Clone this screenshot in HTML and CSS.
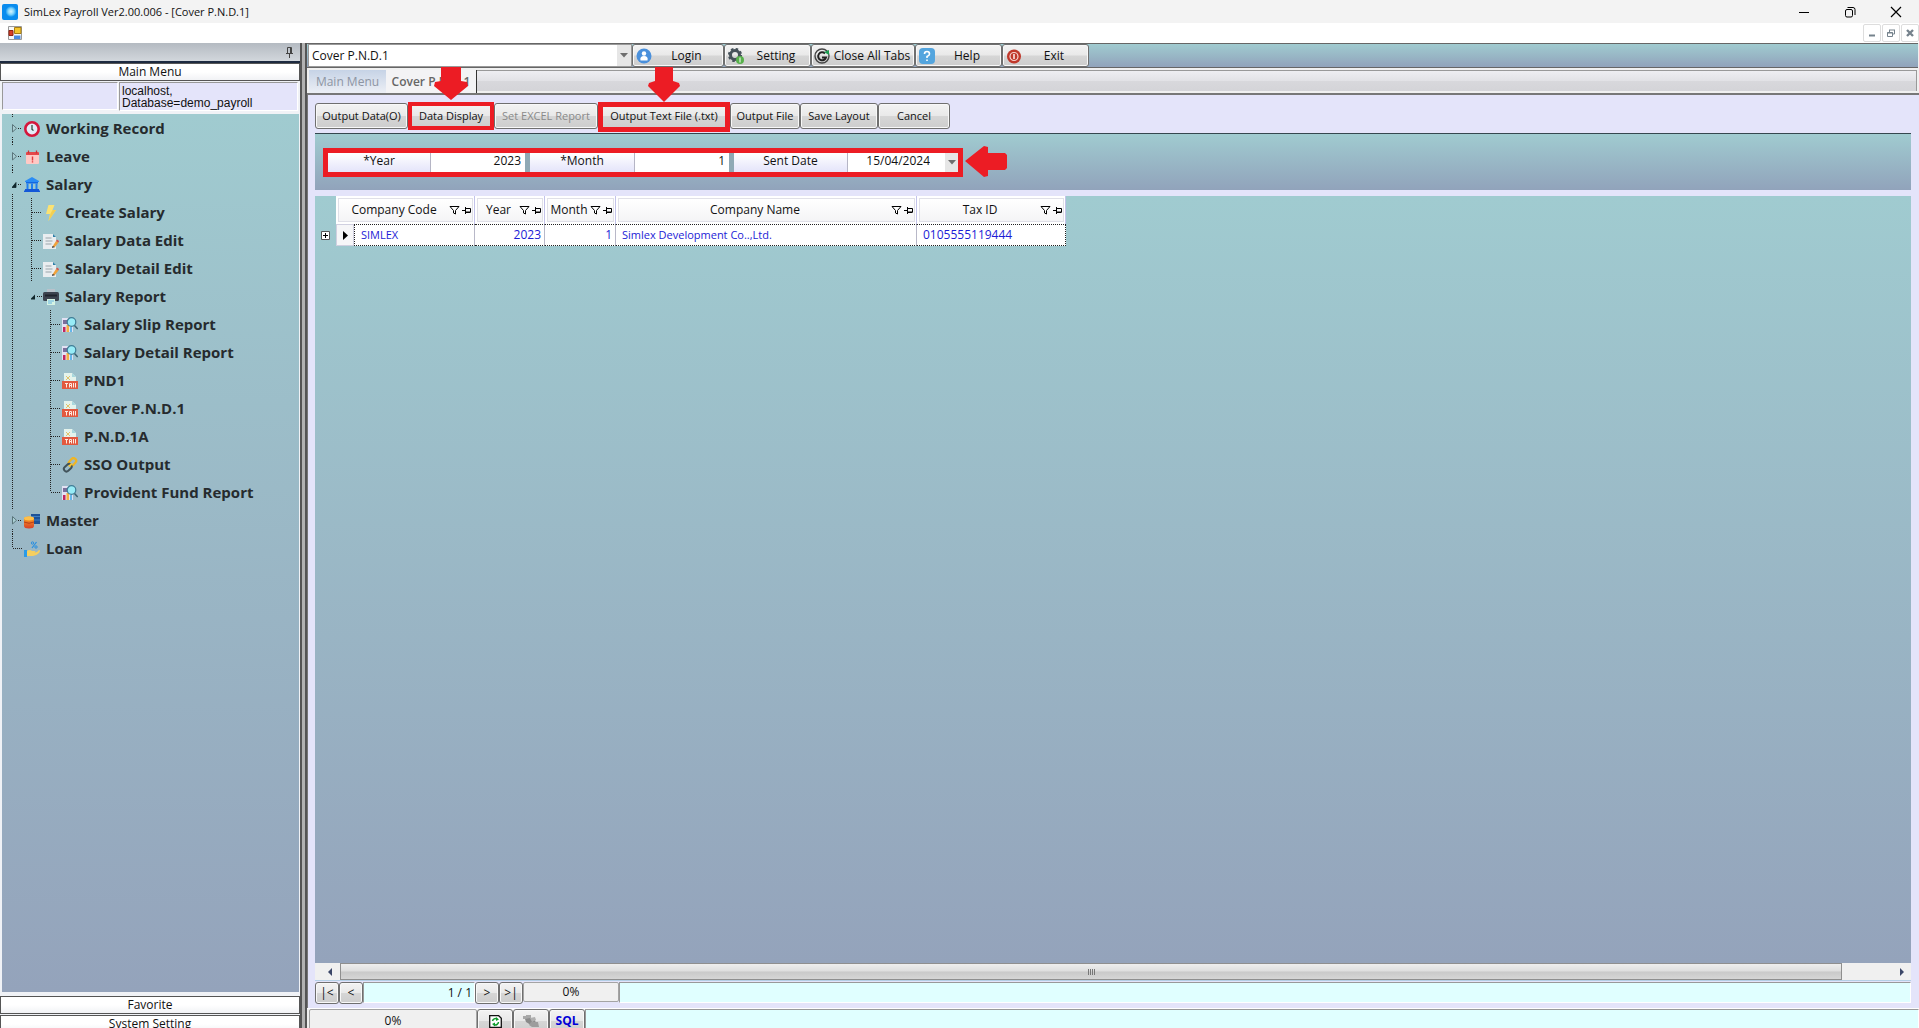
FILE: index.html
```
<!DOCTYPE html>
<html lang="en">
<head>
<meta charset="utf-8">
<title>SimLex Payroll Ver2.00.006 - [Cover P.N.D.1]</title>
<link rel="stylesheet" href="styles.css">
</head>
<body>
<svg class="sprite" aria-hidden="true">
  <defs>
    <linearGradient id="gDb" x1="0" y1="0" x2="0" y2="1"><stop offset="0" stop-color="#ffa51e"/><stop offset="1" stop-color="#d6402a"/></linearGradient>
    <radialGradient id="gApp"><stop offset="0" stop-color="#d8f4ff"/><stop offset=".55" stop-color="#7fd3fb"/><stop offset="1" stop-color="#0a90f0"/></radialGradient>
  </defs>
  <symbol id="t-closed" viewBox="0 0 12 28"><path d="M.5 23v5" class="dots"/><path d="M.5 0v4" class="dots"/><path d="M6 14.500h4" class="dots"/><path d="M.5 10.500v7.500l4-3.700z" fill="#a9ced3" stroke="#5a757b"/></symbol>
  <symbol id="t-open" viewBox="0 0 12 28"><path d="M6 14.500h6" class="dots"/><path d="M-1 17.500h5v-5z" fill="#10262b"/></symbol>
  <symbol id="t-open0" viewBox="0 0 12 28"><path d="M6 14.500h4M.5 24v4M.5 0v4" class="dots"/><path d="M0 17.500h4v-5z" fill="#10262b" stroke="#10262b" stroke-width=".8"/></symbol>
  <symbol id="t-item" viewBox="0 0 12 28"><path d="M.5 0v28M1 14.500h10" class="dots"/></symbol>
  <symbol id="t-last" viewBox="0 0 12 28"><path d="M.5 0v14M.5 14.500h10" class="dots"/></symbol>
  <symbol id="t-line" viewBox="0 0 19 28"><path d="M.5 0v28" class="dots"/></symbol>
  <symbol id="i-clock" viewBox="0 0 16 16"><circle cx="8" cy="8" r="6.700" fill="#e3ecf8" stroke="#d5173c" stroke-width="2.600"/><path d="M8 4v4.500l1.500 1" stroke="#243" stroke-width="1.200" fill="none"/></symbol>
  <symbol id="i-cal" viewBox="0 0 16 16"><rect x="2" y="3" width="13" height="12" rx="1" fill="#ffc9c5"/><path d="M2 6V3.500Q2 3 3 3h11q1 0 1 .5V6z" fill="#e5484a"/><path d="M4.500 1.500v3M12.500 1.500v3" stroke="#c93338" stroke-width="1.300"/><path d="M8.500 7.500v4M8.500 12.300v1.300" stroke="#e23a3d" stroke-width="1.400"/></symbol>
  <symbol id="i-bank" viewBox="0 0 16 16"><path d="M8 0l7 4v1H1V4z" fill="#2a8cf5"/><path d="M2 5h12v1.500H2z" fill="#1467e0"/><path d="M2.500 6.500h2V12h-2zM7 6.500h2V12H7zM11.500 6.500h2V12h-2z" fill="#1f7ff0"/><path d="M1 12h14v1.500h1V15H0v-1.500h1z" fill="#1458d8"/></symbol>
  <symbol id="i-bolt" viewBox="0 0 16 16"><path d="M5.500 0h6L9.500 5H13L5.500 16 7 9H3z" fill="#fbe272"/><path d="M9.500 5H13L5.500 16 7.500 8.500z" fill="#f2cf52"/></symbol>
  <symbol id="i-edit" viewBox="0 0 16 16"><path d="M0 1h10l3 3v12H0z" fill="#e9edf0"/><path d="M10 1l3 3h-3z" fill="#2f80a8"/><path d="M2.500 5h6M2.500 8h7M2.500 11h6" stroke="#9aa5ab"/><path d="M9.500 13.500L13 8l2.500 1.500-4 5z" fill="#f0a23c"/><path d="M13 8l1-1.500 2 1.500-.5 1.500z" fill="#d9534a"/><path d="M9.500 13l-.5 2 3-1z" fill="#333"/></symbol>
  <symbol id="i-print" viewBox="0 0 16 16"><path d="M4 0h8v5H4z" fill="#b9c2cb"/><rect y="3" width="16" height="9" rx="1.500" fill="#3d4450"/><path d="M2 5.500h12v2H2z" fill="#20252e"/><path d="M4 10h8v6H4z" fill="#d5f3e4"/><path d="M5 12h6M5 14h4" stroke="#67b4e0"/></symbol>
  <symbol id="i-report" viewBox="0 0 16 16"><path d="M0 1h11v14H0z" fill="#e2e1f3"/><path d="M1 3h4v4H1z" fill="#7b6f9b"/><path d="M1 10h2.500v5H1z" fill="#c2265f"/><path d="M4.500 8H7v7H4.500z" fill="#f5b043"/><path d="M8 10h2v5H8z" fill="#65b7ea"/><circle cx="9.500" cy="5" r="4.300" fill="#97ecf7" stroke="#3f7d96" stroke-width="1.200"/><path d="M12.500 8.500l3.200 3.500" stroke="#3b6272" stroke-width="1.500"/></symbol>
  <symbol id="i-tax" viewBox="0 0 16 16"><path d="M2 0h8l4 4v5H2z" fill="#e4f3ec"/><path d="M10 0l4 4h-4z" fill="#a8d8dd"/><path d="M4 3l4 4M8 3L4 7" stroke="#e2c269"/><path d="M0 8h16v8H0z" fill="#e2593f"/><path d="M3 10.500h3M4.500 10.500V14.500M7.500 14.500v-4h2v4M7.500 12.500h2M11.500 10v4.500M13.500 10v4.500" stroke="#ffe9df" fill="none"/></symbol>
  <symbol id="i-link" viewBox="0 0 16 16" fill="none"><rect x="-3.600" y="-2.600" width="8.500" height="5.200" rx="2.600" transform="translate(10 5.500) rotate(-48)" stroke="#f0b524" stroke-width="2.200"/><rect x="-4.600" y="-2.600" width="8.500" height="5.200" rx="2.600" transform="translate(6 10.500) rotate(-42)" stroke="#41525a" stroke-width="2"/><path d="M7 9.500l3-3" stroke="#f2c53b" stroke-width="1.800"/></symbol>
  <symbol id="i-db" viewBox="0 0 16 16"><path d="M7 1h9v10H7z" fill="#1d5298"/><path d="M7 3.500h9M7 7h9" stroke="#3f7fc4"/><path d="M0 5.500q0-2 5-2t5 2v7.500q0 2.500-5 2.500t-5-2.500z" fill="url(#gDb)"/><ellipse cx="5" cy="5.500" rx="5" ry="1.900" fill="#ffc04a"/><path d="M0 9q5 2.500 10 0" stroke="#a83119" fill="none" stroke-width=".8"/></symbol>
  <symbol id="i-loan" viewBox="0 0 16 16"><path d="M0 9h3v7H0z" fill="#2b9be8"/><path d="M3 10q3-2 5 0h3q1 1-1 2 4-1 5-3 2 0 0 3-3 3-6 3H3z" fill="#f6cf5f"/><circle cx="8.500" cy="2" r="1.200" stroke="#2a8fe0" fill="none"/><circle cx="12" cy="6" r="1.200" stroke="#2a8fe0" fill="none"/><path d="M12.500 1L8 7" stroke="#2a8fe0" stroke-width="1.200"/></symbol>
  <symbol id="i-filter" viewBox="0 0 11 10"><path d="M1 1.500h9L6.500 5.500V9L4.500 8V5.500z" fill="#fff" stroke="#000"/></symbol>
  <symbol id="i-hpin" viewBox="0 0 10 8"><path d="M0 4.500h3.500M3.500 1v7M3.500 2.500h5v3.500h-5M3.500 6.500h5" stroke="#000" fill="none"/></symbol>
  <symbol id="i-down" viewBox="0 0 8 5"><path d="M0 0h8L4 4.500z" fill="#6e6e6e"/></symbol>
</svg>

<div class="app">
  <header class="titlebar">
    <svg class="app-icon" viewBox="0 0 16 16"><rect width="16" height="16" rx="2" fill="#0a8cee"/><circle cx="9" cy="7.500" r="5.500" fill="url(#gApp)"/></svg>
    <h1>SimLex Payroll Ver2.00.006 - [Cover P.N.D.1]</h1>
    <div class="window-buttons">
      <button type="button" aria-label="Minimize"><svg width="12" height="12" viewBox="0 0 12 12"><path d="M1 6.500h10" stroke="#000"/></svg></button>
      <button type="button" aria-label="Restore"><svg width="12" height="12" viewBox="0 0 12 12" fill="none" stroke="#000"><rect x="1.500" y="3.500" width="7" height="7.500" rx="1.500"/><path d="M3.500 1.500H9q2 0 2 2V9"/></svg></button>
      <button type="button" aria-label="Close"><svg width="12" height="12" viewBox="0 0 12 12"><path d="M1 1l10 10M11 1L1 11" stroke="#000" stroke-width="1.200"/></svg></button>
    </div>
  </header>
  <div class="mdi-bar">
    <svg class="form-icon" viewBox="0 0 14 14"><path d="M.5.5h13v13H.5z" fill="#f7f7f7" stroke="#999"/><path d="M6.500 1.500h6.500v6H6.500z" fill="#f5c52c" stroke="#a67d12"/><path d="M1 4.500h4v5H1z" fill="#d93d26" stroke="#8e2414"/><path d="M6 9.500h6.500V13H6z" fill="#4a8be2"/></svg>
    <div class="mdi-buttons">
      <button type="button" aria-label="Minimize child"><svg width="8" height="8" viewBox="0 0 8 8"><path d="M1 6.500h6" stroke="#75828c" stroke-width="2"/></svg></button>
      <button type="button" aria-label="Restore child"><svg width="8" height="8" viewBox="0 0 8 8" fill="none" stroke="#75828c"><path d="M.5 3.500h5v4h-5zM0 4h6M3 1h5M7.500 1v4H6M2.500 3V.5"/></svg></button>
      <button type="button" aria-label="Close child"><svg width="8" height="8" viewBox="0 0 8 8"><path d="M1 1l6 6M7 1L1 7" stroke="#75828c" stroke-width="2.400"/></svg></button>
    </div>
  </div>

  <div class="workspace">
    <aside class="side">
      <div class="dock-caption">
        <button type="button" aria-label="Auto hide"><svg width="9" height="11" viewBox="0 0 9 11" fill="none" stroke="#444"><path d="M2.500 6V.5h4V6M5.500 1v5M1 6.500h7M4.500 7v4"/></svg></button>
      </div>
      <button type="button" class="section">Main Menu</button>
      <div class="connection">
        <div class="conn-blank"></div>
        <div class="conn-info">localhost,<br>Database=demo_payroll</div>
      </div>
      <nav class="tree">
        <a href="#"><svg class="j"><use href="#t-closed"/></svg><svg class="i"><use href="#i-clock"/></svg>Working Record</a>
        <a href="#"><svg class="j"><use href="#t-closed"/></svg><svg class="i"><use href="#i-cal"/></svg>Leave</a>
        <a href="#"><svg class="j"><use href="#t-open0"/></svg><svg class="i"><use href="#i-bank"/></svg>Salary</a>
        <a href="#"><svg class="g"><use href="#t-line"/></svg><svg class="j"><use href="#t-item"/></svg><svg class="i"><use href="#i-bolt"/></svg>Create Salary</a>
        <a href="#"><svg class="g"><use href="#t-line"/></svg><svg class="j"><use href="#t-item"/></svg><svg class="i"><use href="#i-edit"/></svg>Salary Data Edit</a>
        <a href="#"><svg class="g"><use href="#t-line"/></svg><svg class="j"><use href="#t-item"/></svg><svg class="i"><use href="#i-edit"/></svg>Salary Detail Edit</a>
        <a href="#"><svg class="g"><use href="#t-line"/></svg><svg class="j"><use href="#t-open"/></svg><svg class="i"><use href="#i-print"/></svg>Salary Report</a>
        <a href="#"><svg class="g"><use href="#t-line"/></svg><span class="g"></span><svg class="j"><use href="#t-item"/></svg><svg class="i"><use href="#i-report"/></svg>Salary Slip Report</a>
        <a href="#"><svg class="g"><use href="#t-line"/></svg><span class="g"></span><svg class="j"><use href="#t-item"/></svg><svg class="i"><use href="#i-report"/></svg>Salary Detail Report</a>
        <a href="#"><svg class="g"><use href="#t-line"/></svg><span class="g"></span><svg class="j"><use href="#t-item"/></svg><svg class="i"><use href="#i-tax"/></svg>PND1</a>
        <a href="#"><svg class="g"><use href="#t-line"/></svg><span class="g"></span><svg class="j"><use href="#t-item"/></svg><svg class="i"><use href="#i-tax"/></svg>Cover P.N.D.1</a>
        <a href="#"><svg class="g"><use href="#t-line"/></svg><span class="g"></span><svg class="j"><use href="#t-item"/></svg><svg class="i"><use href="#i-tax"/></svg>P.N.D.1A</a>
        <a href="#"><svg class="g"><use href="#t-line"/></svg><span class="g"></span><svg class="j"><use href="#t-item"/></svg><svg class="i"><use href="#i-link"/></svg>SSO Output</a>
        <a href="#"><svg class="g"><use href="#t-line"/></svg><span class="g"></span><svg class="j"><use href="#t-last"/></svg><svg class="i"><use href="#i-report"/></svg>Provident Fund Report</a>
        <a href="#"><svg class="j"><use href="#t-closed"/></svg><svg class="i"><use href="#i-db"/></svg>Master</a>
        <a href="#"><svg class="j"><use href="#t-last"/></svg><svg class="i"><use href="#i-loan"/></svg>Loan</a>
      </nav>
      <button type="button" class="section">Favorite</button>
      <button type="button" class="section">System Setting</button>
    </aside>
    <div class="splitter"></div>

    <main class="main">
      <div class="toolbar">
        <div class="combo">
          <select aria-label="Open form"><option>Cover P.N.D.1</option></select>
          <span class="drop"><svg width="8" height="5"><use href="#i-down"/></svg></span>
        </div>
        <button type="button" class="btn tool w-login"><svg viewBox="0 0 16 16"><circle cx="8" cy="8" r="7.500" fill="#4a90dc"/><circle cx="8" cy="5.500" r="2.200" fill="#fff"/><path d="M4.500 12.500q-1-4.500 3.500-4.500t3.500 4.500z" fill="#fff"/></svg><span>Login</span></button>
        <button type="button" class="btn tool w-mid"><svg viewBox="0 0 16 16"><circle cx="7" cy="7" r="4.500" fill="none" stroke="#47535b" stroke-width="3"/><circle cx="7" cy="7" r="6" fill="none" stroke="#47535b" stroke-width="2.200" stroke-dasharray="2.500 2.200"/><circle cx="12" cy="12" r="4" fill="#57b04b"/><path d="M12 9.500v5" stroke="#fff"/></svg><span>Setting</span></button>
        <button type="button" class="btn tool tight"><svg viewBox="0 0 16 16" fill="none"><circle cx="8" cy="8" r="7" stroke="#444" stroke-width="1.400"/><path d="M11 5.500a4 4 0 1 0 1 4H8" stroke="#222" stroke-width="2"/><path d="M10 4l5-2v5z" fill="#1c9b50"/></svg><span>Close All Tabs</span></button>
        <button type="button" class="btn tool w-mid"><svg viewBox="0 0 16 16"><rect width="16" height="16" rx="4" fill="#54a5de"/><path d="M5.500 6q0-2.500 2.500-2.500T10.500 6Q10.500 7.500 8 8.500V10M8 11.500v1.500" stroke="#fff" stroke-width="1.600" fill="none"/></svg><span>Help</span></button>
        <button type="button" class="btn tool w-mid"><svg viewBox="0 0 16 16"><circle cx="8" cy="8.500" r="7" fill="#c0382b"/><circle cx="8" cy="8.500" r="4" fill="none" stroke="#f6d5d0" stroke-width="1.200"/><path d="M8 6v5" stroke="#fff" stroke-width="1.400"/></svg><span>Exit</span></button>
      </div>
      <div class="tabs">
        <button type="button" class="tab">Main Menu</button>
        <button type="button" class="tab active">Cover P.N.D.1</button>
        <div class="tab-fill"></div>
      </div>

      <section class="page">
        <div class="actions">
          <button type="button" class="btn a-93">Output Data(O)</button>
          <div class="marked mark-a">
            <button type="button" class="btn a-86">Data Display</button>
            <svg class="arrow" width="34" height="33" viewBox="0 0 34 33"><path d="M7 0h20v14l6 1 1 4-17 14L0 19l1-4 6-1z" fill="#ec1c24"/></svg>
          </div>
          <button type="button" class="btn a-104" disabled>Set EXCEL Report</button>
          <div class="marked mark-b">
            <button type="button" class="btn a-132">Output Text File (.txt)</button>
            <svg class="arrow" width="34" height="35" viewBox="0 0 34 35"><path d="M8 0h18v14l6 2 1 3-16 16L1 19l1-3 6-2z" fill="#ec1c24"/></svg>
          </div>
          <button type="button" class="btn a-70">Output File</button>
          <button type="button" class="btn a-77">Save Layout</button>
          <button type="button" class="btn a-72">Cancel</button>
        </div>

        <form class="criteria">
          <div class="fields">
            <label for="year" class="f-year">*Year</label><input id="year" type="text" value="2023">
            <i></i>
            <label for="month" class="f-month">*Month</label><input id="month" type="text" value="1">
            <i></i>
            <label for="sent" class="f-sent">Sent Date</label><input id="sent" class="date" type="text" value="15/04/2024">
            <button type="button" class="drop" aria-label="Pick date"><svg width="8" height="5"><use href="#i-down"/></svg></button>
            <svg class="arrow-left" width="42" height="31" viewBox="0 0 42 31"><path d="M0 15L19 0l4 1v6h17l2 2v13l-2 2H23v6l-4 1z" fill="#ec1c24"/></svg>
          </div>
        </form>

        <div class="grid">
          <div class="grid-body">
            <table>
              <colgroup><col class="c-exp"><col class="c-ind"><col class="c-code"><col class="c-year"><col class="c-month"><col class="c-name"><col class="c-tax"></colgroup>
              <thead>
                <tr>
                  <td></td>
                  <th colspan="2"><div><span>Company Code</span><svg width="11" height="10"><use href="#i-filter"/></svg><svg width="10" height="8"><use href="#i-hpin"/></svg></div></th>
                  <th><div><span>Year</span><svg width="11" height="10"><use href="#i-filter"/></svg><svg width="10" height="8"><use href="#i-hpin"/></svg></div></th>
                  <th><div><span>Month</span><svg width="11" height="10"><use href="#i-filter"/></svg><svg width="10" height="8"><use href="#i-hpin"/></svg></div></th>
                  <th><div><span>Company Name</span><svg width="11" height="10"><use href="#i-filter"/></svg><svg width="10" height="8"><use href="#i-hpin"/></svg></div></th>
                  <th><div><span>Tax ID</span><svg width="11" height="10"><use href="#i-filter"/></svg><svg width="10" height="8"><use href="#i-hpin"/></svg></div></th>
                </tr>
              </thead>
              <tbody>
                <tr>
                  <td class="exp"><button type="button" aria-label="Expand row"><svg width="9" height="9" viewBox="0 0 9 9"><path d="M.5.5h8v8h-8z" fill="#fff" stroke="#555"/><path d="M2 4.500h5M4.500 2v5" stroke="#000"/></svg></button></td>
                  <td class="ind"><svg width="5" height="9" viewBox="0 0 5 9"><path d="M0 0l5 4.500L0 9z"/></svg></td>
                  <td class="d">SIMLEX</td>
                  <td class="d num">2023</td>
                  <td class="d num">1</td>
                  <td class="d">Simlex Development Co..,Ltd.</td>
                  <td class="d code">0105555119444</td>
                </tr>
              </tbody>
            </table>
          </div>
          <div class="hscroll">
            <button type="button" aria-label="Scroll left"><svg width="4" height="8" viewBox="0 0 4 8"><path d="M4 0v8L0 4z" fill="#3b4668"/></svg></button>
            <div class="thumb"><span></span></div>
            <button type="button" class="right" aria-label="Scroll right"><svg width="4" height="8" viewBox="0 0 4 8"><path d="M0 0v8l4-4z" fill="#3b4668"/></svg></button>
          </div>
        </div>

        <div class="pager">
          <button type="button" class="btn">|&lt;</button>
          <button type="button" class="btn">&lt;</button>
          <input type="text" class="aqua" value="1 / 1" aria-label="Record position" readonly>
          <button type="button" class="btn">&gt;</button>
          <button type="button" class="btn">&gt;|</button>
          <div class="meter">0%</div>
          <div class="aqua rest"></div>
        </div>
      </section>

      <footer class="status">
        <div class="meter">0%</div>
        <button type="button" class="btn" aria-label="Refresh"><svg width="13" height="13" viewBox="0 0 13 13" fill="none"><path d="M.7.7h9l2.600 2.600v9H.7z" fill="#fff" stroke="#111" stroke-width="1.300"/><path d="M3.500 6a3 3 0 0 1 4.500-2M9.500 7a3 3 0 0 1-4.500 2.500" stroke="#109b2c" stroke-width="1.500"/><path d="M7 2l3 2.500L7 6zM6 7.500v4L3 9z" fill="#109b2c"/></svg></button>
        <button type="button" class="btn" aria-label="Layers"><svg width="16" height="13" viewBox="0 0 16 13"><path d="M0 1h5v3H0zM3 0h5v4H3z" fill="#a8a8a8"/><path d="M2 4l5-1 5 2 1 4-5 1-5-3z" fill="#8a8a8a"/><path d="M8 7h7l1 5H9l-3-2z" fill="#9d9d9d"/><path d="M7 3l5-1 1 3-4 2z" fill="#b0b0b0"/></svg></button>
        <button type="button" class="btn sql">SQL</button>
        <div class="aqua rest"></div>
      </footer>
    </main>
  </div>
</div>
</body>
</html>
```
FILE: styles.css
```
* { box-sizing: border-box; }

body {
  margin: 0;
  overflow: hidden;
  font: 12px/16px "Open Sans", "Noto Sans", sans-serif;
  color: #111;
  background: #f0f0f0;
}

button, input, select { font: inherit; color: inherit; margin: 0; padding: 0; }
button { border: 0; background: none; white-space: nowrap; }
svg { flex: none; display: block; }
.sprite { position: absolute; width: 0; height: 0; }
.dots { fill: none; stroke: #222; stroke-dasharray: 1 1; shape-rendering: crispEdges; }

.app { display: flex; flex-direction: column; height: 100vh; }

/* window frame */
.titlebar { flex: none; display: flex; align-items: center; height: 23px; padding-left: 2px; background: #f3f3f3; }
.app-icon { width: 16px; height: 16px; }
.titlebar h1 { flex: 1; margin: 0 0 0 6px; font-size: 11px; font-weight: 400; }
.window-buttons { display: flex; }
.window-buttons button { width: 46px; height: 20px; display: grid; place-items: center; }
.mdi-bar { flex: none; display: flex; align-items: center; justify-content: space-between; height: 20px; padding-left: 8px; background: #fff; }
.form-icon { width: 14px; height: 14px; }
.mdi-buttons { display: flex; gap: 1px; }
.mdi-buttons button { width: 18px; height: 18px; display: grid; place-items: center; border: 1px solid #ddd; border-radius: 2px; }

.workspace { flex: 1; min-height: 0; display: flex; margin-bottom: -5px; }

/* left dock */
.side { flex: none; width: 300px; display: flex; flex-direction: column; background: #f0f2f6; }
.dock-caption { flex: none; height: 20px; display: flex; align-items: center; justify-content: flex-end; padding-right: 6px; background: linear-gradient(#b4bac1, #d2d7dc); border-bottom: 2px solid #1d2a40; }
.section { flex: none; width: 300px; height: 18px; line-height: 16px; border: 1px solid #555; background: linear-gradient(#fff 50%, #f1f2f5); }
.connection { flex: none; display: flex; gap: 1px; height: 33px; padding: 1px 2px 3px; }
.connection > div { background: #e4e4fa; border: 1px solid #999; border-right-color: #fff; border-bottom-color: #fff; }
.conn-blank { width: 116px; height: 28px; }
.conn-info { flex: 1; padding: 2px 0 0 2px; font: 12px/12px "Liberation Sans", sans-serif; }
.tree { flex: 1; min-height: 0; margin: 0 1px 4px 2px; padding-left: 10px; background: linear-gradient(#a0cbd0, #94a3bb); overflow: hidden; }
.tree a { display: flex; align-items: center; height: 28px; color: #262b2e; font-weight: 700; font-size: 15px; line-height: 20px; text-decoration: none; white-space: nowrap; }
.tree .g { width: 19px; height: 28px; }
.tree .j { width: 12px; height: 28px; overflow: visible; }
.tree .i { width: 16px; height: 16px; margin: 2px 6px 0 0; }
.side .section + .section { margin-top: 1px; }

.splitter { flex: none; width: 7px; background: #b2b2b2; border: solid #555; border-width: 0 2px; }

/* right area */
.main { flex: 1; min-width: 0; display: flex; flex-direction: column; background: #f0f0f0; }

.btn { flex: none; display: flex; align-items: center; justify-content: center; border: 1px solid #6f6f6f; border-radius: 3px; background: linear-gradient(#f3f3f3, #e9e9e9 48%, #d6d6d6 52%, #cdcdcd); box-shadow: inset 0 0 0 1px #f8f8f8; }
.btn:disabled { color: #8a8a8a; }

.toolbar { flex: none; display: flex; height: 25px; padding-left: 1px; border: solid #666; border-width: 1px 0; background: linear-gradient(#a0cbd0, #91a3bb); margin-right: 1px; }
.combo { flex: none; display: flex; width: 324px; border: 1px solid #999; background: #fff; }
.combo select { flex: 1; min-width: 0; padding-left: 3px; border: 0; background: none; appearance: none; }
.drop { flex: none; width: 14px; display: grid; place-items: center; background: #e6e6e6; }
.tool svg { width: 16px; height: 16px; margin-left: 3px; }
.tool span { flex: 1; text-align: center; }
.w-login { width: 92px; }
.w-mid { width: 87px; }
.w-login span, .w-mid span { padding-left: 6px; padding-right: 8px; }
.tight { width: 104px; }
.tight svg { margin-left: 2px; }

.tabs { flex: none; display: flex; height: 27px; padding: 2px 2px 0; border-bottom: 2px solid #777; }
.tab { width: 77px; color: #8d95a3; background: linear-gradient(#c6d3e6, #eceff5); }
.tab.active { width: 91px; font-weight: 600; color: #666; background: #f3f3f5; border-right: 1px solid #333; }
.tab-fill { flex: 1; border: 1px solid #999; border-width: 1px 1px 0 0; margin-bottom: 2px; background: linear-gradient(#eeeef2, #e2e2e6 48%, #d8d8dc 52%, #d4d4d8); }

.page { flex: 1; min-height: 0; display: flex; flex-direction: column; padding: 8px 8px 0 7px; background: #e4e4fa; border-left: 1px solid #777; }
.actions { flex: none; display: flex; height: 26px; font-size: 11px; }
.actions .btn { height: 26px; }
.a-93 { width: 93px; } .a-86 { width: 86px; } .a-104 { width: 104px; } .a-132 { width: 132px; }
.a-70 { width: 70px; } .a-77 { width: 78px; } .a-72 { width: 72px; }

/* red call-outs */
.marked { position: relative; }
.marked::after { content: ""; position: absolute; inset: -1px 0; border: 4px solid #ec1c24; }
.mark-b::after { inset: -1px 0 -3px; border-width: 5px; }
.arrow { position: absolute; left: 50%; margin-left: -17px; bottom: 29px; z-index: 2; }
.mark-b .arrow { bottom: 27px; }

.criteria { flex: none; height: 57px; margin-top: 4px; padding: 14px 8px; border-top: 1px solid #35474f; background: linear-gradient(#a0cbd0, #91a3bb); }
.fields { position: relative; display: flex; width: 640px; height: 29px; border: 5px solid #ec1c24; }
.fields label { text-align: center; line-height: 16px; background: linear-gradient(#fff, #e4e4fa); border-right: 1px solid #b5b5c5; }
.fields input { width: 94px; border: 0; border-radius: 0; background: #fff; text-align: right; padding: 0 4px 3px 0; outline: 0; }
.fields i { width: 5px; background: #8fa9b5; }
.f-year { width: 103px; }
.f-month { width: 105px; }
.f-sent { width: 114px; }
.fields input.date { width: 97px; padding-right: 15px; }
.fields .drop { flex: 1; }
.arrow-left { position: absolute; left: 637px; top: -7px; }

/* result grid */
.grid { flex: 1; min-height: 0; margin-top: 6px; display: flex; flex-direction: column; border-bottom: 1px solid #b4cfe6; }
.grid-body { flex: 1; min-height: 0; background: linear-gradient(#a0cbd0, #94a3bb); }
table { border-collapse: separate; border-spacing: 0; table-layout: fixed; width: 751px; }
td, th { padding: 0; font-weight: 400; }
.c-exp { width: 21px; } .c-ind { width: 18px; } .c-code { width: 121px; } .c-year { width: 70px; }
.c-month { width: 71px; } .c-name { width: 301px; } .c-tax { width: 149px; }
th { height: 28px; padding: 2px 1px 2px 2px; background: #fff; border-right: 1px solid #c3c3ea; }
th div { display: flex; align-items: center; height: 24px; gap: 2px; border: 1px solid #e0e0e8; background: linear-gradient(#fff, #f4f4f6); }
th span { flex: 1; text-align: center; padding-left: 2px; }
tbody td { height: 22px; }
.exp button, .exp svg { display: block; }
.exp button { margin-left: 6px; }
.ind { background: #f6f6f8; border: 1px solid #d0d0e0; }
.ind svg { margin: 0 auto; }
.d { background: #fff; color: #1c1cd6; padding: 0 6px; border: dotted #222; border-width: 1px 0; border-right: 1px solid #b8b8c8; font-size: 11px; white-space: nowrap; }
.d.num, .d.code { font-size: 12px; }
.d.num { text-align: right; padding-right: 3px; }
.ind + .d { border-left: 1px dotted #222; }
.d:last-child { border-right: 1px dotted #222; }

.hscroll { flex: none; display: flex; height: 17px; background: #f0f0f0; }
.hscroll button { width: 25px; display: grid; place-items: center; padding-left: 4px; }
.hscroll .right { width: 69px; padding-left: 50px; }
.thumb { flex: 1; display: grid; place-items: center; border: 1px solid #8f8f8f; background: linear-gradient(#eee, #dedede 48%, #c9c9c9 52%, #d6d6d6); }
.thumb span { width: 7px; height: 6px; background: repeating-linear-gradient(90deg, #777 0 1px, transparent 1px 2px); }

.aqua { background: #e0ffff; border: 1px solid #999; border-right-color: #fff; border-bottom-color: #fff; }
.rest { flex: 1; }
.meter { display: grid; place-items: center; border: 1px solid #a4a4a4; border-radius: 2px; background: #f0f0f0; }
.pager { flex: none; display: flex; height: 22px; margin: 1px 0 4px; }
.pager .btn { width: 24px; }
.pager input { width: 112px; height: 21px; border-radius: 0; text-align: right; padding: 0 2px; outline: 0; }
.pager .meter { width: 96px; height: 20px; }
.pager .rest { height: 21px; }

.status { flex: none; display: flex; height: 25px; border-top: 1px solid #fff; padding-left: 2px; }
.status .meter { width: 168px; }
.status .btn { width: 36px; }
.status .sql { color: #0000d8; font-weight: 700; }
```
